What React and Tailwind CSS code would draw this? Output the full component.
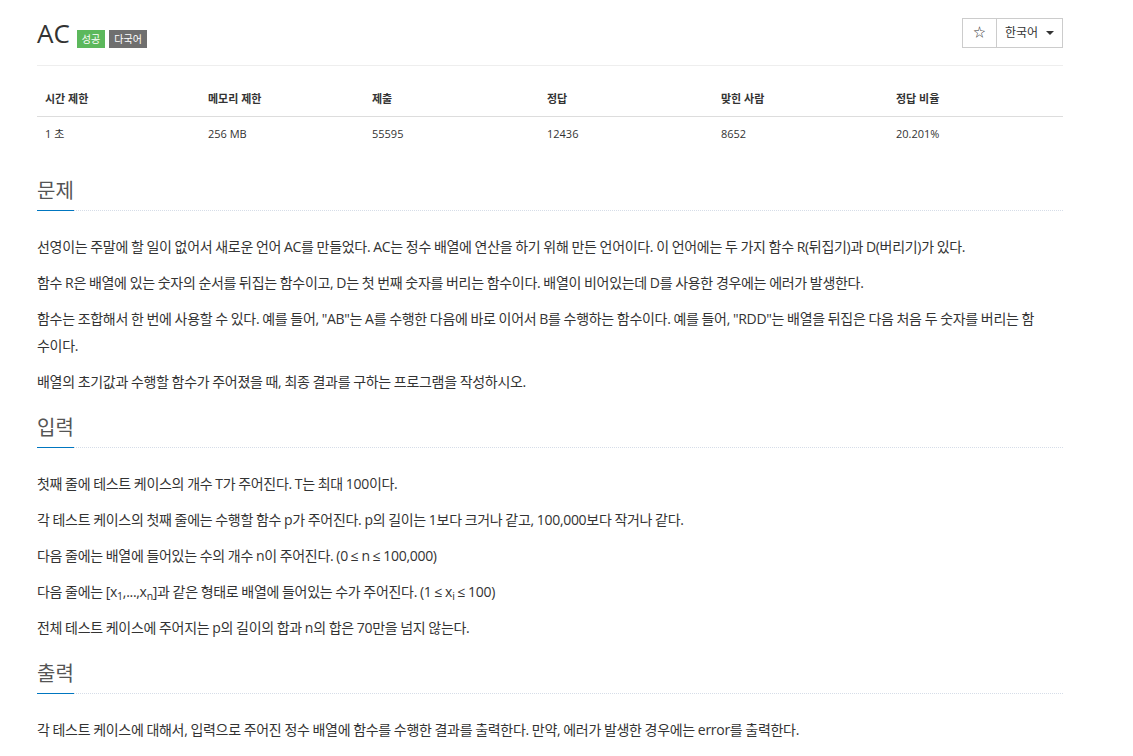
import React from "react";

const font = { fontFamily: '"Open Sans", "Noto Sans CJK KR", sans-serif' };

const stats = [
  ["시간 제한", "1 초"],
  ["메모리 제한", "256 MB"],
  ["제출", "55595"],
  ["정답", "12436"],
  ["맞힌 사람", "8652"],
  ["정답 비율", "20.201%"],
];

const Section = ({ title, first, children }) => (
  <section className={first ? "mt-[29px]" : "mt-[22px]"}>
    <div className="flex items-end">
      <h2 className="text-[20px] leading-[22px] text-[#555] pb-[8px] border-b border-[#0076c0]">{title}</h2>
      <div className="flex-1 border-b border-dotted border-[#d6dde8]"></div>
    </div>
    <div className="pt-[22px] text-[14px] leading-[27px] text-[#333] tracking-[-0.3px] [word-spacing:-0.4px] break-all">{children}</div>
  </section>
);

const P = ({ children }) => <p className="mb-[9px] last:mb-0">{children}</p>;

export default function App() {
  return (
    <div className="bg-white min-h-screen" style={font}>
      <div className="w-[1026px] ml-[37px] pt-[15px]">
        <div className="flex justify-between items-start border-b border-[#eee] pb-[14px]">
          <div className="flex items-end gap-[4px]">
            <h1 className="text-[26px] leading-[36px] text-[#333] mr-[3px]">AC</h1>
            <span className="mb-[3px] bg-[#5cb85c] text-white text-[10px] leading-[18px] px-[5px]">성공</span>
            <span className="mb-[3px] bg-[#6f6f6f] text-white text-[10px] leading-[18px] px-[5px]">다국어</span>
          </div>
          <div className="flex mt-[3px] border border-[#ccc] text-[12px] text-[#333] h-[30px]">
            <div className="w-[34px] flex items-center justify-center border-r border-[#ccc] text-[12px]">☆</div>
            <div className="w-[65px] flex items-center pl-[8px] gap-[8px]">
              <span>한국어</span>
              <span className="w-0 h-0 border-l-[4px] border-r-[4px] border-t-[4px] border-l-transparent border-r-transparent border-t-[#333]"></span>
            </div>
          </div>
        </div>

        <div className="mt-[17px] text-[11px] text-[#333]">
          <div className="grid grid-cols-[163px_164px_175px_174px_175px_175px] border-b border-[#ddd] font-bold">
            {stats.map(([h]) => (
              <div key={h} className="px-[8px] pt-[8px] pb-[9px] leading-[16px]">{h}</div>
            ))}
          </div>
          <div className="grid grid-cols-[163px_164px_175px_174px_175px_175px]">
            {stats.map(([h, v]) => (
              <div key={h} className="px-[8px] py-[8px] leading-[18px]">{v}</div>
            ))}
          </div>
        </div>

        <Section title="문제" first>
          <P>선영이는 주말에 할 일이 없어서 새로운 언어 AC를 만들었다. AC는 정수 배열에 연산을 하기 위해 만든 언어이다. 이 언어에는 두 가지 함수 R(뒤집기)과 D(버리기)가 있다.</P>
          <P>함수 R은 배열에 있는 숫자의 순서를 뒤집는 함수이고, D는 첫 번째 숫자를 버리는 함수이다. 배열이 비어있는데 D를 사용한 경우에는 에러가 발생한다.</P>
          <P>함수는 조합해서 한 번에 사용할 수 있다. 예를 들어, "AB"는 A를 수행한 다음에 바로 이어서 B를 수행하는 함수이다. 예를 들어, "RDD"는 배열을 뒤집은 다음 처음 두 숫자를 버리는 함<br />수이다.</P>
          <P>배열의 초기값과 수행할 함수가 주어졌을 때, 최종 결과를 구하는 프로그램을 작성하시오.</P>
        </Section>

        <Section title="입력">
          <P>첫째 줄에 테스트 케이스의 개수 T가 주어진다. T는 최대 100이다.</P>
          <P>각 테스트 케이스의 첫째 줄에는 수행할 함수 p가 주어진다. p의 길이는 1보다 크거나 같고, 100,000보다 작거나 같다.</P>
          <P>다음 줄에는 배열에 들어있는 수의 개수 n이 주어진다. (0 ≤ n ≤ 100,000)</P>
          <P>다음 줄에는 [x<sub>1</sub>,...,x<sub>n</sub>]과 같은 형태로 배열에 들어있는 수가 주어진다. (1 ≤ x<sub>i</sub> ≤ 100)</P>
          <P>전체 테스트 케이스에 주어지는 p의 길이의 합과 n의 합은 70만을 넘지 않는다.</P>
        </Section>

        <Section title="출력">
          <P>각 테스트 케이스에 대해서, 입력으로 주어진 정수 배열에 함수를 수행한 결과를 출력한다. 만약, 에러가 발생한 경우에는 error를 출력한다.</P>
        </Section>
      </div>
    </div>
  );
}
